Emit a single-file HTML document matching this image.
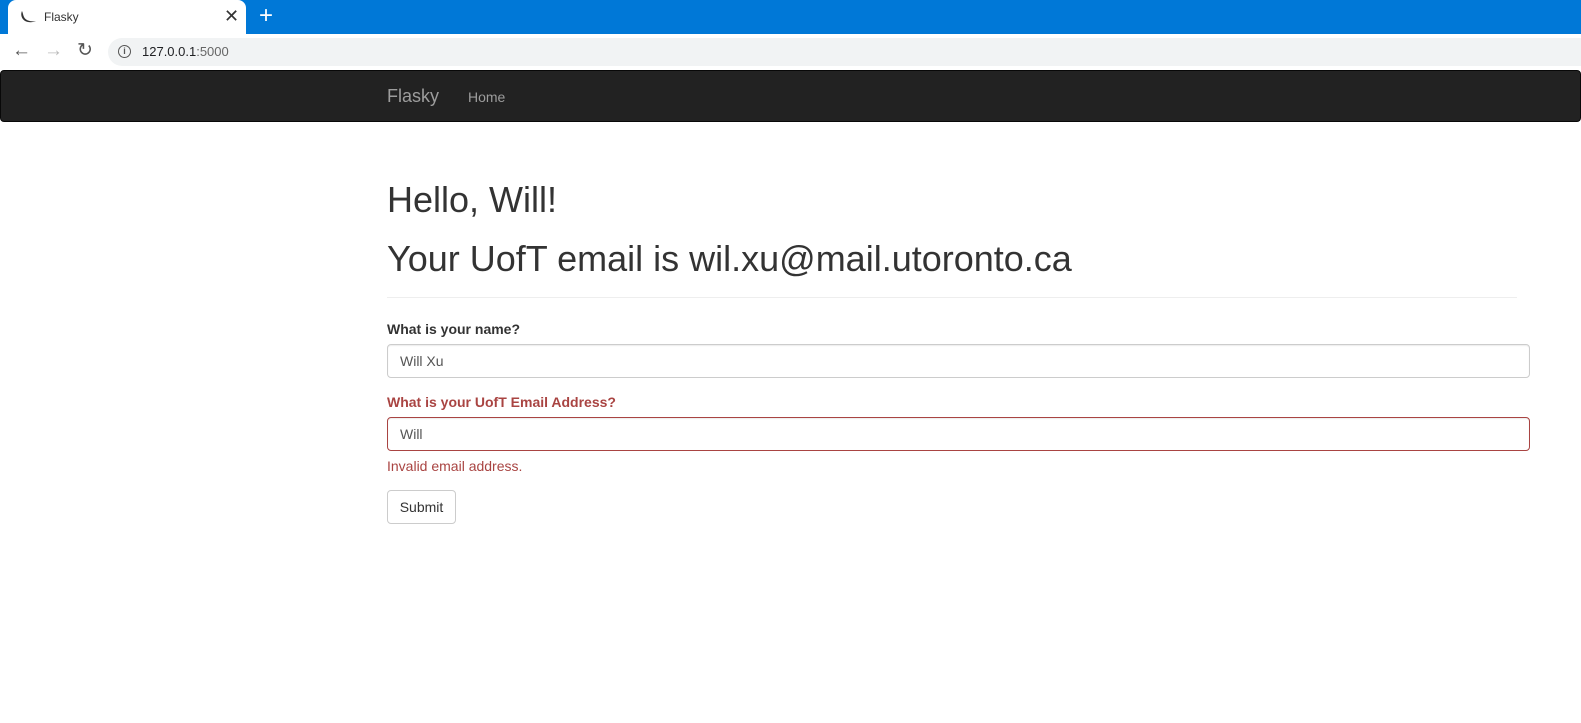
<!DOCTYPE html>
<html><head><meta charset="utf-8"><style>
*{box-sizing:border-box;margin:0;padding:0}
body{width:1581px;height:723px;overflow:hidden;background:#fff;font-family:"Liberation Sans",Arial,sans-serif;color:#333;position:relative}
.abs{position:absolute}
.tabbar{left:0;top:0;width:1581px;height:34px;background:#0078d7}
.tab{left:8px;top:0;width:238px;height:34px;background:#fff;border-radius:8px 8px 0 0}
.toolbar{left:0;top:34px;width:1581px;height:36px;background:#fff}
.omni{left:108px;top:38px;width:1473px;height:28px;background:#f1f3f4;border-radius:14px 0 0 14px}
.nav{left:0;top:70px;width:1581px;height:52px;background:#222;border:1px solid #080808;border-radius:4px}
h1{position:absolute;left:387px;font-size:36px;font-weight:400;line-height:40px;color:#333}
label{position:absolute;left:387px;font-size:14px;font-weight:700}
.inp{position:absolute;left:387px;width:1143px;height:34px;border:1px solid #ccc;border-radius:4px;font-size:14px;line-height:32px;padding-left:12px;color:#555;box-shadow:inset 0 1px 1px rgba(0,0,0,.075)}
</style></head><body>
<div class="abs tabbar"></div>
<div class="abs tab"></div>
<svg class="abs" style="left:19px;top:9px" width="18" height="16" viewBox="0 0 18 16"><path d="M3 2 C1 6 3 12 9 13 C12 13.5 15 13 17 12 C13 13 7 12 5 8 C4 6 4 4 3 2Z" fill="#333"/></svg>
<div class="abs" style="left:44px;top:10px;font-size:12px;color:#333">Flasky</div>
<div class="abs" style="left:224px;top:6px;font-size:18px;color:#333">✕</div>
<div class="abs" style="left:259px;top:2px;font-size:24px;color:#fff;font-weight:300">+</div>
<div class="abs toolbar"></div>
<div class="abs omni"></div>
<div class="abs" style="left:12px;top:40px;font-size:19px;color:#555">←</div>
<div class="abs" style="left:44px;top:40px;font-size:19px;color:#bbb">→</div>
<div class="abs" style="left:77px;top:39px;font-size:19px;color:#555">↻</div>
<div class="abs" style="left:118px;top:45px;width:13px;height:13px;border:1.5px solid #555;border-radius:50%;font-size:9px;line-height:10px;text-align:center;color:#555;font-weight:700">i</div>
<div class="abs" style="left:142px;top:44px;font-size:13px;color:#202124">127.0.0.1<span style="color:#666">:5000</span></div>
<div class="abs nav"></div>
<div class="abs" style="left:387px;top:86px;font-size:18px;color:#9d9d9d">Flasky</div>
<div class="abs" style="left:468px;top:89px;font-size:14px;color:#9d9d9d">Home</div>
<h1 style="top:180px">Hello, Will!</h1>
<h1 style="top:239px">Your UofT email is wil.xu@mail.utoronto.ca</h1>
<div class="abs" style="left:387px;top:297px;width:1130px;height:1px;background:#eee"></div>
<label style="top:321px">What is your name?</label>
<div class="inp" style="top:344px">Will Xu</div>
<label style="top:394px;color:#a94442">What is your UofT Email Address?</label>
<div class="inp" style="top:417px;border-color:#a94442">Will</div>
<div class="abs" style="left:387px;top:458px;font-size:14px;color:#a94442">Invalid email address.</div>
<div class="abs" style="left:387px;top:490px;width:69px;height:34px;border:1px solid #ccc;border-radius:4px;font-size:14px;line-height:32px;text-align:center;color:#333">Submit</div>
</body></html>
